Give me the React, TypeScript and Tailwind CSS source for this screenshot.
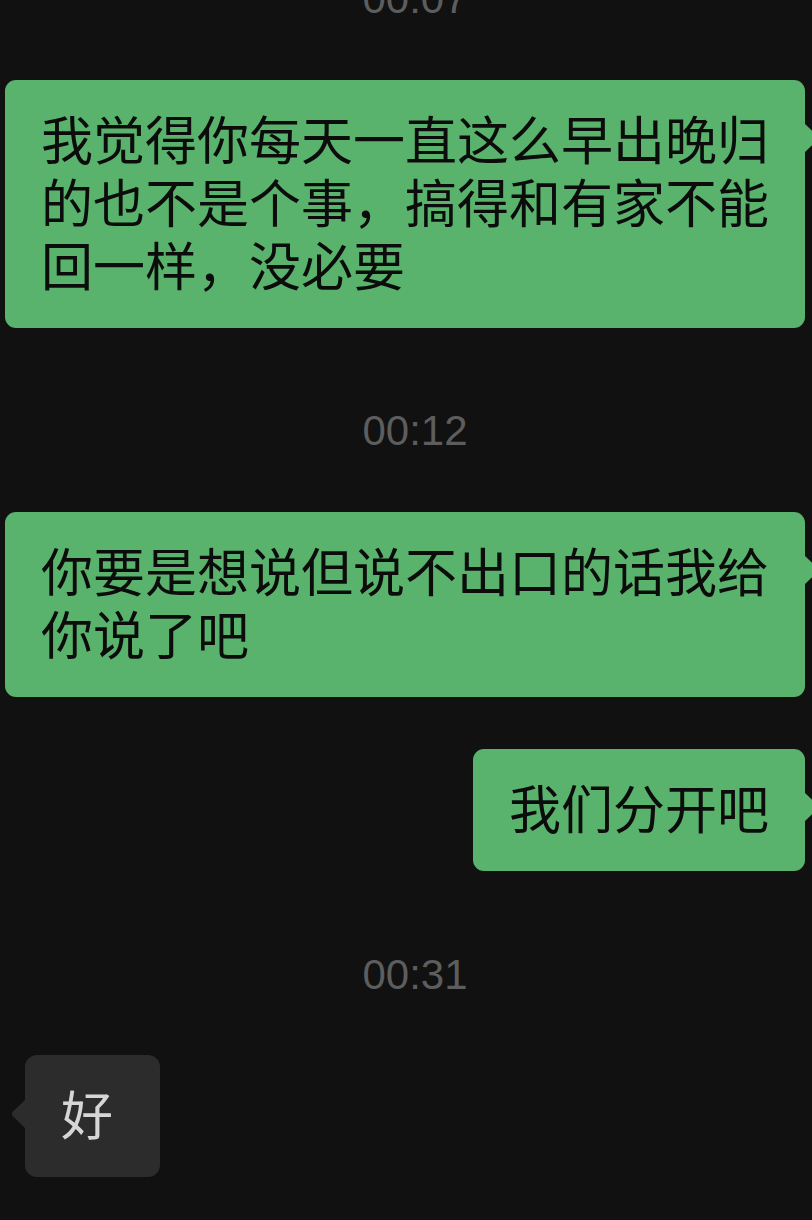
import React from "react";

type Msg =
  | { kind: "time"; text: string; className: string }
  | { kind: "out"; text: string; className: string }
  | { kind: "in"; text: string; className: string };

const messages: Msg[] = [
  { kind: "time", text: "00:07", className: "mt-[-21px]" },
  {
    kind: "out",
    text: "我觉得你每天一直这么早出晚归的也不是个事，搞得和有家不能回一样，没必要",
    className: "mt-[61px]",
  },
  { kind: "time", text: "00:12", className: "mt-[83px]" },
  {
    kind: "out",
    text: "你要是想说但说不出口的话我给你说了吧",
    className: "mt-[61px]",
  },
  { kind: "out", text: "我们分开吧", className: "mt-[52px]" },
  { kind: "time", text: "00:31", className: "mt-[84px]" },
  { kind: "in", text: "好", className: "mt-[60px]" },
];

const cjk = { fontFamily: '"Noto Sans CJK SC", "Noto Sans", sans-serif' };

function TimeStamp({ text, className }: { text: string; className: string }) {
  return (
    <div
      className={`pl-[18px] text-center text-[42px] leading-[40px] text-[#5d5d5d] ${className}`}
      style={{ fontFamily: '"Liberation Sans", Arial, sans-serif' }}
    >
      {text}
    </div>
  );
}

function SentBubble({ text, className }: { text: string; className: string }) {
  return (
    <div className={`flex justify-end pr-[7px] ${className}`}>
      <div
        className="relative max-w-[800px] rounded-[11px] bg-[#59b36c] pl-[36px] pr-[36px] pt-[26px] pb-[33px] text-[52px] leading-[63px] text-[#0c0c0c]"
        style={cjk}
      >
        {text}
        {/* tail */}
        <svg
          className="absolute right-[-15px] top-[43px]"
          width="16"
          height="30"
          viewBox="0 0 16 30"
        >
          <path d="M0 0 L13 12.5 Q15.5 15 13 17.5 L0 30 Z" fill="#59b36c" />
        </svg>
      </div>
    </div>
  );
}

function ReceivedBubble({ text, className }: { text: string; className: string }) {
  return (
    <div className={`flex justify-start pl-[25px] ${className}`}>
      <div
        className="relative rounded-[12px] bg-[#2c2c2c] pl-[36px] pr-[47px] pt-[26px] pb-[33px] text-[52px] leading-[63px] text-[#d6d6d6]"
        style={cjk}
      >
        {text}
        <svg
          className="absolute left-[-15px] top-[44px]"
          width="16"
          height="30"
          viewBox="0 0 16 30"
        >
          <path d="M16 0 L3 12.5 Q0.5 15 3 17.5 L16 30 Z" fill="#2c2c2c" />
        </svg>
      </div>
    </div>
  );
}

export default function App() {
  return (
    <div className="flex h-[1220px] w-[812px] flex-col overflow-hidden bg-[#111111]">
      {messages.map((m, i) => {
        if (m.kind === "time") return <TimeStamp key={i} text={m.text} className={m.className} />;
        if (m.kind === "out") return <SentBubble key={i} text={m.text} className={m.className} />;
        return <ReceivedBubble key={i} text={m.text} className={m.className} />;
      })}
    </div>
  );
}
